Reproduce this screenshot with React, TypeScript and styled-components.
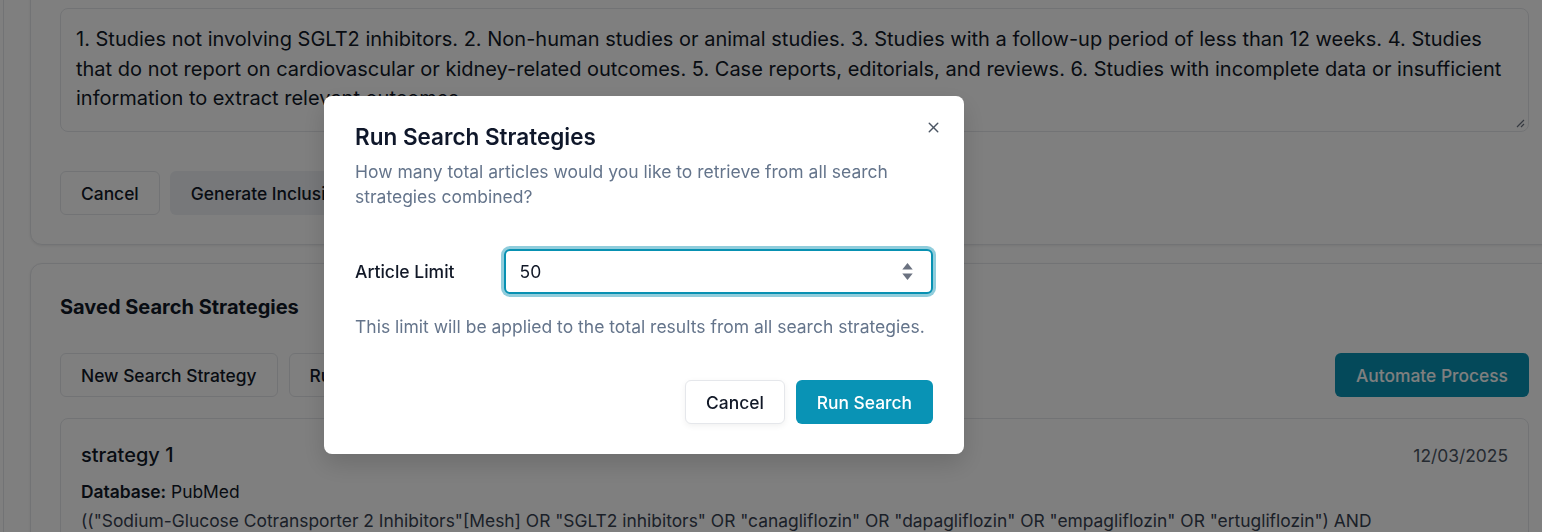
import { X } from "lucide-react";
import styled, { createGlobalStyle } from "styled-components";

/** 전역 스타일 */
const GlobalS = createGlobalStyle`
  html, body {
    margin: 0;
    padding: 0;
    overflow: hidden;
    background: #ffffff;
  }
  * {
    box-sizing: border-box;
  }
  body {
    font-family: Inter, "Noto Sans", "Liberation Sans", sans-serif;
    color: #111827;
  }
`;

const criteriaText =
  "1. Studies not involving SGLT2 inhibitors. 2. Non-human studies or animal studies. 3. Studies with a follow-up period of less than 12 weeks. 4. Studies that do not report on cardiovascular or kidney-related outcomes. 5. Case reports, editorials, and reviews. 6. Studies with incomplete data or insufficient information to extract relevant outcomes.";

const queryText =
  '(("Sodium-Glucose Cotransporter 2 Inhibitors"[Mesh] OR "SGLT2 inhibitors" OR "canagliflozin" OR "dapagliflozin" OR "empagliflozin" OR "ertugliflozin") AND ("Cardiovascular Diseases"[Mesh] OR "heart failure" OR "kidney disease"))';

const App = (): JSX.Element => {
  return (
    <>
      <GlobalS />
      <PageS>
        <MainS>
          <CardS $top={0}>
            <CriteriaBoxS>
              <p>{criteriaText}</p>
              <ResizeGripS viewBox="0 0 10 10">
                <path d="M9 2 L2 9 M9 6 L6 9" stroke="#6b7280" strokeWidth="1.2" />
              </ResizeGripS>
            </CriteriaBoxS>
            <ButtonRowS $gap={10} $top={39}>
              <ButtonS $variant="outline">Cancel</ButtonS>
              <ButtonS $variant="soft">Generate Inclusion/Exclusion Criteria</ButtonS>
            </ButtonRowS>
          </CardS>

          <CardS $top={18}>
            <SectionTitleS>Saved Search Strategies</SectionTitleS>
            <ToolbarS>
              <ButtonRowS $gap={11} $top={0}>
                <ButtonS $variant="outline">New Search Strategy</ButtonS>
                <ButtonS $variant="outline">Run Search Strategies</ButtonS>
              </ButtonRowS>
              <ButtonS $variant="primary">Automate Process</ButtonS>
            </ToolbarS>
            <StrategyS>
              <StrategyHeadS>
                <h3>strategy 1</h3>
                <span>12/03/2025</span>
              </StrategyHeadS>
              <MetaS>
                <b>Database:</b> PubMed
              </MetaS>
              <QueryS>{queryText}</QueryS>
            </StrategyS>
          </CardS>
        </MainS>
      </PageS>

      <OverlayS>
        <DialogS>
          <CloseS aria-label="Close">
            <X size={17} strokeWidth={2} />
          </CloseS>
          <DialogTitleS>Run Search Strategies</DialogTitleS>
          <DialogDescS>
            How many total articles would you like to retrieve from all search strategies combined?
          </DialogDescS>
          <FieldGridS>
            <label htmlFor="limit">Article Limit</label>
            <NumberWrapS>
              <input id="limit" type="text" defaultValue="50" />
              <SpinS viewBox="0 0 10 16">
                <path d="M5 1.5 L9 6.5 H1 Z" fill="#6b7280" />
                <path d="M5 14.5 L9 9.5 H1 Z" fill="#6b7280" />
              </SpinS>
            </NumberWrapS>
          </FieldGridS>
          <HintS>This limit will be applied to the total results from all search strategies.</HintS>
          <DialogFooterS>
            <ButtonS $variant="outline" $shadow>
              Cancel
            </ButtonS>
            <ButtonS $variant="primary">Run Search</ButtonS>
          </DialogFooterS>
        </DialogS>
      </OverlayS>
    </>
  );
};

export default App;

/** 페이지 (위로 스크롤된 상태) */
const PageS = styled.div`
  width: 1560px;
  height: 532px;
  padding-left: 3px;
  overflow: hidden;
`;

/** 메인 영역 */
const MainS = styled.main`
  border-left: 1px solid #e5e7eb;
  padding: 0 0 0 26px;
  margin-top: -22px;
  height: 600px;
`;

/** 카드 */
const CardS = styled.section<{ $top: number }>`
  margin-top: ${(p) => p.$top}px;
  background: #ffffff;
  border: 1px solid #e5e7eb;
  border-radius: 12px;
  box-shadow: 0 1px 3px rgba(0, 0, 0, 0.08);
  padding: 29px 30px 29px 29px;
`;

/** 제외 기준 텍스트 박스 */
const CriteriaBoxS = styled.div`
  position: relative;
  height: 124px;
  border: 1px solid #e5e7eb;
  border-radius: 8px;
  padding: 16px 18px 0 15px;

  p {
    margin: 0;
    font-size: 20px;
    line-height: 29.5px;
    color: #111827;
  }
`;

/** 리사이즈 손잡이 */
const ResizeGripS = styled.svg`
  position: absolute;
  right: 3px;
  bottom: 3px;
  width: 10px;
  height: 10px;
`;

/** 버튼 줄 */
const ButtonRowS = styled.div<{ $gap: number; $top: number }>`
  display: flex;
  gap: ${(p) => p.$gap}px;
  margin-top: ${(p) => p.$top}px;
`;

/** 버튼 */
const ButtonS = styled.button<{ $variant: "outline" | "soft" | "primary"; $shadow?: boolean }>`
  height: 44px;
  padding: 0 20px;
  border-radius: 6px;
  font-family: Inter, "Liberation Sans", sans-serif;
  font-size: 17.4px;
  font-weight: 500;
  white-space: nowrap;
  cursor: pointer;
  border: 1px solid ${(p) => (p.$variant === "outline" ? "#e5e7eb" : "transparent")};
  background: ${(p) =>
    p.$variant === "primary" ? "#0993b5" : p.$variant === "soft" ? "#eef1f5" : "#ffffff"};
  color: ${(p) => (p.$variant === "primary" ? "#ffffff" : "#111827")};
  box-shadow: ${(p) => (p.$shadow ? "0 2px 6px rgba(0, 0, 0, 0.06)" : "none")};
`;

/** 섹션 제목 */
const SectionTitleS = styled.h2`
  margin: 0;
  font-size: 20px;
  line-height: 28px;
  font-weight: 700;
  color: #111827;
`;

/** 툴바 */
const ToolbarS = styled.div`
  display: flex;
  justify-content: space-between;
  align-items: center;
  margin-top: 32px;
`;

/** 전략 카드 */
const StrategyS = styled.article`
  margin-top: 21px;
  border: 1px solid #e5e7eb;
  border-radius: 8px;
  padding: 22px 20px 20px 20px;
`;

/** 전략 카드 헤더 */
const StrategyHeadS = styled.header`
  display: flex;
  justify-content: space-between;
  align-items: center;

  h3 {
    margin: 0;
    font-size: 20px;
    line-height: 28px;
    font-weight: 500;
    color: #111827;
  }

  span {
    font-size: 17.4px;
    color: #4b5563;
  }
`;

/** 데이터베이스 */
const MetaS = styled.p`
  margin: 10px 0 0;
  font-size: 17.4px;
  line-height: 26px;
  color: #111827;

  b {
    font-weight: 600;
  }
`;

/** 검색식 */
const QueryS = styled.p`
  margin: 3px 0 0;
  font-size: 17.4px;
  line-height: 26px;
  color: #374151;
`;

/** 모달 배경 */
const OverlayS = styled.div`
  position: fixed;
  inset: 0;
  background: rgba(0, 0, 0, 0.5);
`;

/** 모달 */
const DialogS = styled.div`
  position: absolute;
  left: 324px;
  top: 96px;
  width: 640px;
  background: #ffffff;
  border-radius: 8px;
  box-shadow: 0 10px 25px rgba(0, 0, 0, 0.15);
  padding: 27px 31px 30px 31px;
`;

/** 닫기 */
const CloseS = styled.button`
  position: absolute;
  top: 22px;
  right: 22px;
  width: 18px;
  height: 18px;
  padding: 0;
  border: none;
  background: none;
  color: #4b5563;
  display: flex;
  align-items: center;
  justify-content: center;
`;

/** 모달 제목 */
const DialogTitleS = styled.h2`
  margin: 0;
  font-size: 22.5px;
  line-height: 28px;
  font-weight: 600;
  color: #0f172a;
`;

/** 모달 설명 */
const DialogDescS = styled.p`
  margin: 8px 0 0;
  width: 545px;
  font-size: 17.5px;
  line-height: 25px;
  color: #64748b;
`;

/** 입력 그리드 */
const FieldGridS = styled.div`
  display: grid;
  grid-template-columns: repeat(4, 1fr);
  gap: 16px;
  align-items: center;
  margin-top: 40px;

  label {
    font-size: 17.5px;
    font-weight: 500;
    color: #111827;
  }
`;

/** 숫자 입력 */
const NumberWrapS = styled.div`
  position: relative;
  grid-column: span 3;

  input {
    display: block;
    width: 100%;
    height: 45px;
    border: 2px solid #0891b2;
    border-radius: 6px;
    box-shadow: 0 0 0 3px rgba(8, 145, 178, 0.45);
    padding: 0 14px;
    font-family: Inter, "Liberation Sans", sans-serif;
    font-size: 17.5px;
    color: #111827;
    outline: none;
  }
`;

/** 스피너 */
const SpinS = styled.svg`
  position: absolute;
  right: 19px;
  top: 12px;
  width: 13px;
  height: 21px;
`;

/** 안내 문구 */
const HintS = styled.p`
  margin: 20px 0 0;
  font-size: 17.5px;
  line-height: 25px;
  color: #64748b;
`;

/** 모달 하단 버튼 */
const DialogFooterS = styled.footer`
  display: flex;
  justify-content: flex-end;
  gap: 11px;
  margin-top: 41px;
`;
